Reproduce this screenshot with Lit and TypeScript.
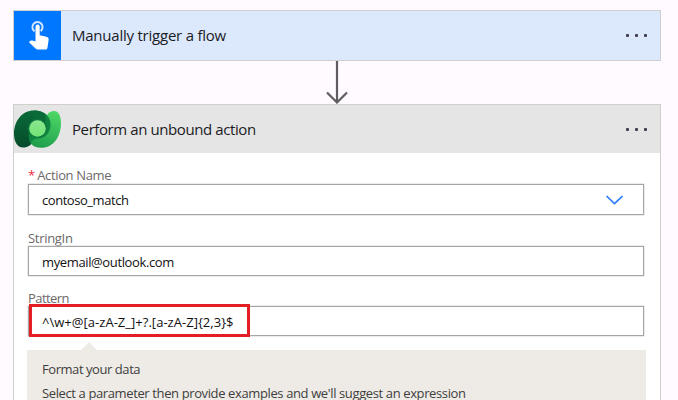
import { LitElement, html, css, svg } from "lit";
import { customElement, property } from "lit/decorators.js";

@customElement("flow-dots")
class FlowDots extends LitElement {
  static styles = css`
    :host { display: flex; gap: 6px; margin-left: auto; margin-right: 13px; }
    i { width: 3px; height: 3px; border-radius: 1px; background: #3d3f4c; }
  `;
  render() {
    return html`<i></i><i></i><i></i>`;
  }
}

@customElement("flow-field")
class FlowField extends LitElement {
  @property() label = "";
  @property() value = "";
  @property({ type: Boolean }) required = false;
  @property({ type: Boolean }) dropdown = false;
  @property({ type: Boolean }) marked = false;

  static styles = css`
    :host { display: block; }
    .label { height: 18px; line-height: var(--label-line, 20px); font-size: 13px; color: #6b6968; white-space: pre; letter-spacing: var(--label-spacing, -0.3px); }
    .star { color: #f0283c; margin-right: 2px; letter-spacing: 0; }
    .box {
      position: relative; box-sizing: border-box; height: var(--box-height, 30px);
      border: 1px solid #a6a6a6; box-shadow: 0 0 0 0.5px #d8d8d8; background: #fff;
      display: flex; align-items: center; justify-content: space-between; padding: 0 20px 0 13px;
      font-size: 13px; line-height: 18px; color: #111; letter-spacing: var(--value-spacing, -0.3px);
    }
    .value { padding-top: var(--value-drop, 0); }
    .mark { position: absolute; left: 0; top: -3px; width: 215px; height: 27px; border: 3px solid #e41e25; }
  `;
  render() {
    return html`
      <div class="label">${this.required ? html`<span class="star">*</span>` : ""}${this.label}</div>
      <div class="box">
        <span class="value">${this.value}</span>
        ${this.dropdown
          ? html`<svg width="18" height="10" viewBox="0 0 18 10"><path d="M1.500 1l8 7.500L17.500 1" fill="none" stroke="#2b7cff" stroke-width="1.700"/></svg>`
          : ""}
        ${this.marked ? html`<div class="mark"></div>` : ""}
      </div>`;
  }
}

const tapIcon = svg`
  <path d="M20.600 20.300a5.100 5.100 0 1 1 6-.2" fill="none" stroke="#cfe4ff" stroke-width="2"/>
  <path d="M21.500 15.500a2.100 2.100 0 0 1 4.200 0v8.800l6.800 1.500q2.400.6 2.200 2.800l-1.300 8.400q-.3 1.500-1.600 1.500h-8.200q-1 0-1.800-.8l-6.800-6.500q.9-2.300 3.500-1.600l3 .9z" fill="#fff"/>`;

@customElement("app-root")
class AppRoot extends LitElement {
  static styles = css`
    :host {
      display: block; box-sizing: border-box; width: 678px; height: 400px; overflow: hidden;
      background: #fefaff; padding: 10px 17px 0 13px; font-family: "Open Sans", "Noto Sans", sans-serif;
    }
    .card { box-sizing: border-box; border: 1px solid #d0cfcc; width: 648px; }
    .trigger { height: 51px; display: flex; align-items: center; background: #dce9fd; border-width: 1.5px 1px; }
    .tile { width: 47px; height: 49px; background: #0077ff; flex: none; }
    .title { margin-left: 11px; font-size: 15px; line-height: 20px; color: #1b1b1f; white-space: pre; padding-bottom: 1px; }
    .t1 { letter-spacing: -0.23px; }
    .t2 { letter-spacing: -0.41px; }
    .link { height: 43px; display: flex; justify-content: center; }
    .action { height: 320px; background: #fff; }
    .head { height: 48px; background: #e5e5e5; display: flex; align-items: center; }
    .logo { flex: none; }
    .body { padding: 13px 16px 0 14px; }
    .one { --box-height: 31px; --label-line: 18px; --label-spacing: -0.35px; --value-spacing: -0.45px; margin-bottom: 13px; }
    .two { --value-spacing: -0.37px; --value-drop: 2px; margin-bottom: 12px; }
    .three { --label-spacing: -0.55px; --value-drop: 2px; --value-spacing: 0.03px; }
    .panel { position: relative; margin: 14px -2px 0 -1px; height: 80px; background: #eeebe7; padding: 7px 15px; color: #3f3e3d; font-size: 13px; }
    .panel::before { content: ""; position: absolute; left: 54px; top: -8px; border: 8.5px solid transparent; border-top: 0; border-bottom: 8px solid #eeebe7; }
    .line { height: 24px; line-height: 24px; white-space: pre; }
    .l1 { letter-spacing: -0.44px; }
    .l2 { letter-spacing: -0.38px; }
  `;
  render() {
    return html`
      <div class="card trigger">
        <svg class="tile" viewBox="0 0 47 49">${tapIcon}</svg>
        <span class="title t1">Manually trigger a flow</span>
        <flow-dots></flow-dots>
      </div>
      <div class="link">
        <svg width="22" height="43" viewBox="0 0 22 43"><path d="M11 0v41M1 31.500L11 41.500 21 31.500" fill="none" stroke="#5f5d5f" stroke-width="2.200"/></svg>
      </div>
      <div class="card action">
        <div class="head">
          <svg class="logo" width="47" height="48" viewBox="0 0 47 48">
            <defs>
              <linearGradient id="dark" x1="0" y1="0" x2="0" y2="1"><stop offset="0" stop-color="#096b38"/><stop offset="1" stop-color="#064a2b"/></linearGradient>
              <linearGradient id="light" x1=".8" y1="0" x2=".4" y2="1"><stop offset="0" stop-color="#4ed866"/><stop offset="1" stop-color="#1f9f4c"/></linearGradient>
              <linearGradient id="core" x1="0" y1="0" x2="0" y2="1"><stop offset="0" stop-color="#8ce78f"/><stop offset="1" stop-color="#70e374"/></linearGradient>
            </defs>
            <path d="M20 5.500c6.500 0 12 2.500 15 7.500L24 35c-4 .5-6 5-11.500 7C5.500 44.500 0 39 0 29 0 16 8 5.500 20 5.500z" fill="url(#dark)"/>
            <path d="M37.500 6.500C43.500 4.500 47 9.500 47 18 47 32 39 42.800 27.500 42.800c-5 0-8.500-1.500-11-4.800-1.500-3.500-1.500-8 0-12L33 15C32.500 9.500 34 7.500 37.500 6.500z" fill="url(#light)"/>
            <path d="M30.500 8c4 2.600 6 6.800 6 11.500 0 8-5 14-13 14-3.300 0-5 2.200-7.200 4.200-2.300-5-2.300-11 1.200-15.700z" fill="#118341"/>
            <path d="M20 5.500c4 0 7.500 1 10.500 2.700 1.500 4.300 1.200 9.800-.5 15.300L16 29z" fill="#0a6a38"/>
            <circle cx="23.500" cy="23.500" r="9.600" fill="#0d7a3d"/>
            <circle cx="23.500" cy="23.500" r="8.300" fill="url(#core)"/>
          </svg>
          <span class="title t2">Perform an unbound action</span>
          <flow-dots></flow-dots>
        </div>
        <div class="body">
          <flow-field class="one" required dropdown label="Action Name" value="contoso_match"></flow-field>
          <flow-field class="two" label="StringIn" value="myemail@outlook.com"></flow-field>
          <flow-field class="three" marked label="Pattern" value="^\\w+@[a-zA-Z_]+?.[a-zA-Z]{2,3}$"></flow-field>
          <div class="panel">
            <div class="line l1">Format your data</div>
            <div class="line l2">Select a parameter then provide examples and we'll suggest an expression</div>
          </div>
        </div>
      </div>`;
  }
}
